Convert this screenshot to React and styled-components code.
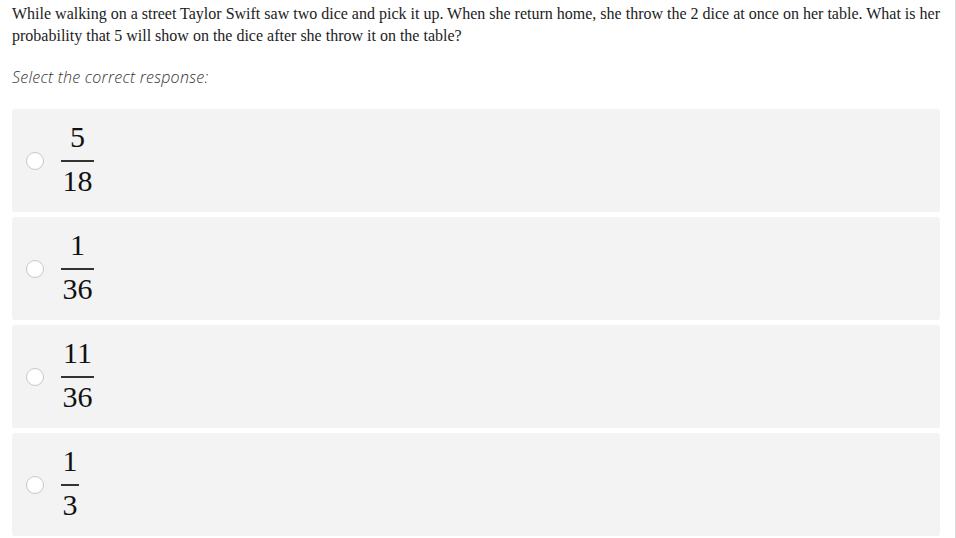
import React from "react";
import styled, { createGlobalStyle } from "styled-components";

const Global = createGlobalStyle`
  html, body { margin: 0; padding: 0; background: #fff; }
  body { font-family: "Liberation Serif", "Times New Roman", serif; }
`;

const Frame = styled.div`
  width: 955px;
  height: 538px;
  border-right: 1px solid #dcdcdc;
  box-sizing: content-box;
  overflow: hidden;
`;

const Content = styled.div`
  padding: 3px 10px 0 12px;
  display: flex;
  flex-direction: column;
`;

const Question = styled.p`
  margin: 0;
  font-family: "Liberation Serif", "Times New Roman", serif;
  font-size: 16px;
  line-height: 21.5px;
  color: #222;
`;

const Prompt = styled.p`
  margin: 21px 0 0;
  font-family: "Open Sans", "Lato", sans-serif;
  font-style: italic;
  font-weight: 300;
  font-size: 16px;
  letter-spacing: 0.25px;
  line-height: 20px;
  color: #333;
`;

const Options = styled.div`
  margin-top: 22px;
  display: flex;
  flex-direction: column;
  gap: 5px;
  width: 928px;
`;

const Option = styled.label`
  display: flex;
  align-items: center;
  gap: 17px;
  height: 103px;
  padding-left: 14px;
  background: #f3f3f3;
  border-radius: 3px;
  box-sizing: border-box;
  cursor: pointer;
`;

const Radio = styled.span`
  width: 18px;
  height: 18px;
  border-radius: 50%;
  background: #fff;
  border: 1px solid #c8c8c8;
  box-sizing: border-box;
  flex: none;
`;

const Frac = styled.span`
  display: inline-flex;
  flex-direction: column;
  align-items: stretch;
  margin-bottom: 4px;
  font-family: "Liberation Serif", "Times New Roman", serif;
  font-size: 30px;
  color: #111;
`;

const Part = styled.span`
  display: block;
  text-align: center;
  line-height: 30px;
  padding: 0 1.5px;
  margin: ${(p) => (p.$top ? "0 0 8px" : "4px 0 0")};
`;

const Bar = styled.span`
  display: block;
  height: 2px;
  background: #333;
`;

const options = [
  ["5", "18"],
  ["1", "36"],
  ["11", "36"],
  ["1", "3"],
];

export default function App() {
  return (
    <Frame>
      <Global />
      <Content>
        <Question>
          While walking on a street Taylor Swift saw two dice and pick it up. When she return home, she throw the 2 dice at once on her table. What is her probability that 5 will show on the dice after she throw it on the table?
        </Question>
        <Prompt>Select the correct response:</Prompt>
        <Options>
          {options.map(([n, d], i) => (
            <Option key={i}>
              <Radio />
              <Frac>
                <Part $top>{n}</Part>
                <Bar />
                <Part>{d}</Part>
              </Frac>
            </Option>
          ))}
        </Options>
      </Content>
    </Frame>
  );
}
